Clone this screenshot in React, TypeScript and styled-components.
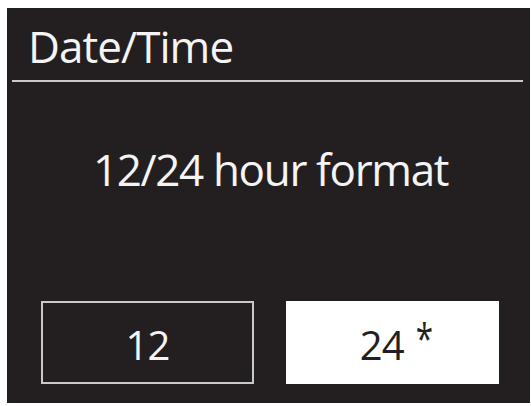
import React from "react"
import styled, { createGlobalStyle } from "styled-components"

const GlobalStyle = createGlobalStyle`
  html, body {
    margin: 0;
    padding: 0;
    background: #ffffff;
  }
  body {
    font-family: "Open Sans", "DejaVu Sans", sans-serif;
  }
`;

const Page = styled.div`
  width: 531px;
  height: 406px;
  padding: 8px 1px 3px 7px;
  box-sizing: border-box;
`;

const Screen = styled.div`
  width: 523px;
  height: 395px;
  background-color: #231f20;
  color: #f4f4f4;
  display: flex;
  flex-direction: column;
  box-sizing: border-box;
  padding: 16px 7px 0 5px;
`;

const Title = styled.div`
  font-size: 44px;
  line-height: 1;
  padding-left: 16px;
  letter-spacing: -0.95px;
`;

const Divider = styled.div`
  height: 2px;
  margin-top: 12px;
  background-color: #c9c9c9;
`;

const Message = styled.div`
  margin-top: 65px;
  font-size: 44px;
  line-height: 1;
  text-align: center;
  letter-spacing: -1.35px;
  padding-left: 6px;
`;

const Options = styled.div`
  display: flex;
  gap: 32px;
  margin-top: 110px;
  padding-left: 29px;
`;

interface OptionProps {
  $selected?: boolean
}

const Option = styled.div<OptionProps>`
  width: 213px;
  height: 83px;
  box-sizing: border-box;
  border: 2px solid ${(props: OptionProps) => props.$selected ? "#ffffff" : "#c9c9c9"};
  background-color: ${(props: OptionProps) => props.$selected ? "#ffffff" : "transparent"};
  color: ${(props: OptionProps) => props.$selected ? "#231f20" : "#f4f4f4"};
  font-size: 40px;
  line-height: 40px;
  padding-top: 22px;
  padding-left: ${(props: OptionProps) => props.$selected ? "10px" : "0"};
  text-align: center;
  letter-spacing: -0.8px;
  overflow: hidden;
`;

const Star = styled.span`
  display: inline-block;
  font-size: 42px;
  line-height: 20px;
  vertical-align: 6px;
  margin-left: 9px;
  transform: scaleX(0.75);
`;

const App: React.FC = () => {
  return (
    <>
      <GlobalStyle />
      <Page>
        <Screen>
          <Title>Date/Time</Title>
          <Divider />
          <Message>12/24 hour format</Message>
          <Options>
            <Option>12</Option>
            <Option $selected>
              24<Star>*</Star>
            </Option>
          </Options>
        </Screen>
      </Page>
    </>
  )
}

export default App
